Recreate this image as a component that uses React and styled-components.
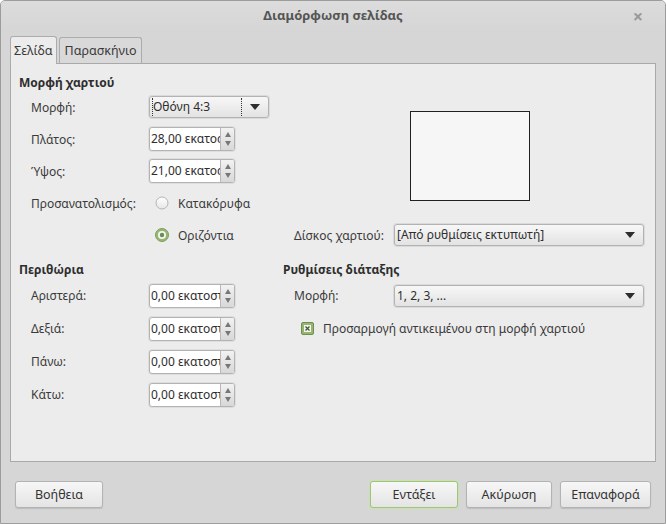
import styled, { createGlobalStyle } from "styled-components";

const GlobalStyle = createGlobalStyle`
  html, body {
    margin: 0;
    padding: 0;
    background: #ffffff;
  }
  body {
    font-family: "Noto Sans", "Liberation Sans", sans-serif;
    font-size: 12px;
    color: #3a3a3a;
  }
`;

const Window = styled.div`
  width: 666px;
  height: 524px;
  box-sizing: border-box;
  background: #d6d6d6;
  border: 1px solid #9c9c9c;
  border-radius: 5px 5px 0 0;
  display: flex;
  flex-direction: column;
  overflow: hidden;
`;

const TitleBar = styled.div`
  height: 27px;
  display: flex;
  align-items: center;
  justify-content: center;
  position: relative;
  background: linear-gradient(#dcdcdc, #d6d6d6);
`;

const Title = styled.div`
  font-weight: 700;
  font-size: 13px;
  color: #555555;
`;

const Close = styled.div`
  position: absolute;
  right: 22px;
  top: 3px;
  font-size: 18px;
  font-weight: 700;
  color: #9a9a9a;
`;

const Body = styled.div`
  flex: 1;
  display: flex;
  flex-direction: column;
  padding: 0 9px;
`;

const Tabs = styled.div`
  margin-top: 7px;
  height: 28px;
  display: flex;
  align-items: flex-end;
  gap: 2px;
`;

const Tab = styled.div`
  height: ${({ $active }) => ($active ? "28px" : "26px")};
  box-sizing: border-box;
  padding: 0 ${({ $active }) => ($active ? "3px" : "5px")};
  display: flex;
  align-items: center;
  font-size: 12.5px;
  background: ${({ $active }) => ($active ? "#ececec" : "#d9d9d9")};
  border: 1px solid #acacac;
  border-bottom: none;
  border-radius: 3px 3px 0 0;
  position: relative;
  z-index: ${({ $active }) => ($active ? 2 : 0)};
  margin-bottom: ${({ $active }) => ($active ? "-1px" : "0")};
  padding-bottom: ${({ $active }) => ($active ? "1px" : "0")};
`;

const Panel = styled.div`
  height: 399px;
  box-sizing: border-box;
  background: #ececec;
  border: 1px solid #a9a9a9;
  padding: 9px 11px 0 8px;
`;

const TopSection = styled.div`
  display: grid;
  grid-template-columns: 264px 1fr;
  grid-template-rows: 18px repeat(5, 32px);
`;

const BottomSection = styled.div`
  margin-top: 8px;
  display: grid;
  grid-template-columns: 264px 1fr;
  grid-template-rows: 20px repeat(4, 33px);
`;

const Heading = styled.div`
  font-weight: 700;
  display: flex;
  align-items: center;
  color: #2e2e2e;
  grid-column: ${({ $col }) => $col || "auto"};
  grid-row: ${({ $row }) => $row || "auto"};
`;

const Row = styled.div`
  display: grid;
  grid-template-columns: ${({ $label }) => $label || "118px"} 1fr;
  align-items: center;
  padding-left: ${({ $indent }) => $indent || "12px"};
  grid-column: ${({ $col }) => $col || "auto"};
  grid-row: ${({ $row }) => $row || "auto"};
`;

const Label = styled.span`
  white-space: nowrap;
`;

const PreviewArea = styled.div`
  grid-column: 2;
  grid-row: 1 / 5;
  padding: 38px 0 0 127px;
`;

const Paper = styled.div`
  width: 120px;
  height: 90px;
  box-sizing: border-box;
  background: #f6f6f6;
  border: 1px solid #202020;
`;

const Combo = styled.div`
  width: ${({ $w }) => $w || "100%"};
  height: 22px;
  box-sizing: border-box;
  display: flex;
  align-items: center;
  border: 1px solid #b3b3b3;
  border-radius: 3px;
  background: linear-gradient(#f7f7f7, #e3e3e3);
  box-shadow: 0 0 0 1px #dadada;
  padding: 0 8px 0 2px;
`;

const ComboText = styled.span`
  flex: 1;
  white-space: nowrap;
  overflow: hidden;
  line-height: 18px;
  color: #2e2e2e;
  ${({ $focus }) =>
    $focus &&
    `
    border-left: 1px dotted #333;
    border-right: 1px dotted #333;
    margin-right: 8px;
  `}
`;

const Spin = styled.div`
  width: 86px;
  height: 24px;
  box-sizing: border-box;
  display: flex;
  border: 1px solid #b3b3b3;
  border-radius: 3px;
  background: #ffffff;
  box-shadow: 0 0 0 1px #dedede;
  overflow: hidden;
`;

const SpinText = styled.span`
  flex: 1;
  white-space: nowrap;
  overflow: hidden;
  padding-left: 1px;
  line-height: 22px;
  font-size: 12px;
  color: #2e2e2e;
`;

const SpinButtons = styled.div`
  width: 13px;
  border-left: 1px solid #b8b8b8;
  background: linear-gradient(#f2f2f2, #d8d8d8);
  display: flex;
  flex-direction: column;
  align-items: center;
  justify-content: center;
  gap: 4px;
`;

const Choice = styled.div`
  display: flex;
  align-items: center;
  gap: 9px;
  padding-left: 6px;
`;

const CheckRow = styled.div`
  grid-column: 2;
  grid-row: 3;
  display: flex;
  align-items: center;
  gap: 9px;
  padding-left: 18px;
`;

const ButtonBar = styled.div`
  margin-top: 19px;
  display: flex;
  gap: 8px;
  padding: 0 5px 0 5px;
`;

const Spacer = styled.div`
  flex: 1;
`;

const Button = styled.div`
  width: ${({ $w }) => $w}px;
  height: 27px;
  box-sizing: border-box;
  display: flex;
  align-items: center;
  justify-content: center;
  border: 1px solid ${({ $default }) => ($default ? "#9fc47a" : "#b3b3b3")};
  box-shadow: ${({ $default }) =>
    $default ? "0 0 0 1px #c9e0b1" : "0 1px 1px rgba(0,0,0,0.12)"};
  border-radius: 3px;
  background: linear-gradient(#f7f7f7, #e4e4e4);
  font-size: 12.5px;
  color: #333;
`;

const Arrow = () => (
  <svg width="10" height="6" viewBox="0 0 10 6">
    <path d="M0 0h10L5 6z" fill="#2e2e2e" />
  </svg>
);

const SpinArrows = () => (
  <SpinButtons>
    <svg width="6" height="5" viewBox="0 0 6 5">
      <path d="M3 0l3 5H0z" fill="#777" />
    </svg>
    <svg width="6" height="5" viewBox="0 0 6 5">
      <path d="M0 0h6L3 5z" fill="#777" />
    </svg>
  </SpinButtons>
);

const Radio = ({ checked }) => (
  <svg width="14" height="14" viewBox="0 0 14 14">
    <defs>
      <linearGradient id="rg" x1="0" y1="0" x2="0" y2="1">
        <stop offset="0" stopColor="#ffffff" />
        <stop offset="1" stopColor="#e6e6e6" />
      </linearGradient>
    </defs>
    {checked ? (
      <>
        <circle cx="7" cy="7" r="6.5" fill="#95b96f" stroke="#7f9d5e" />
        <circle cx="7" cy="7" r="4" fill="#f4f4f4" />
        <circle cx="7" cy="7" r="2.2" fill="#6f8a55" />
      </>
    ) : (
      <circle cx="7" cy="7" r="6" fill="url(#rg)" stroke="#b4b4b4" />
    )}
  </svg>
);

const Check = () => (
  <svg width="13" height="13" viewBox="0 0 13 13">
    <rect x="0.5" y="0.5" width="12" height="12" rx="1.5" fill="#94b66f" stroke="#6f8e50" />
    <rect x="3" y="3" width="7" height="7" fill="#f4f4f4" />
    <path d="M4.5 4.5l4 4M8.5 4.5l-4 4" stroke="#3f5a2b" strokeWidth="1.3" />
  </svg>
);

const SpinField = ({ value }) => (
  <Spin>
    <SpinText>{value}</SpinText>
    <SpinArrows />
  </Spin>
);

export default function App() {
  return (
    <>
      <GlobalStyle />
      <Window>
        <TitleBar>
          <Title>Διαμόρφωση σελίδας</Title>
          <Close>×</Close>
        </TitleBar>
        <Body>
          <Tabs>
            <Tab $active>Σελίδα</Tab>
            <Tab>Παρασκήνιο</Tab>
          </Tabs>
          <Panel>
            <TopSection>
              <Heading $col="1" $row="1">Μορφή χαρτιού</Heading>
              <Row $col="1" $row="2">
                <Label>Μορφή:</Label>
                <Combo $w="120px">
                  <ComboText $focus>Οθόνη 4:3</ComboText>
                  <Arrow />
                </Combo>
              </Row>
              <Row $col="1" $row="3">
                <Label>Πλάτος:</Label>
                <SpinField value="28,00 εκατοστά" />
              </Row>
              <Row $col="1" $row="4">
                <Label>Ύψος:</Label>
                <SpinField value="21,00 εκατοστά" />
              </Row>
              <Row $col="1" $row="5">
                <Label>Προσανατολισμός:</Label>
                <Choice>
                  <Radio />
                  <span>Κατακόρυφα</span>
                </Choice>
              </Row>
              <Row $col="1" $row="6">
                <span />
                <Choice>
                  <Radio checked />
                  <span>Οριζόντια</span>
                </Choice>
              </Row>
              <PreviewArea>
                <Paper />
              </PreviewArea>
              <Row $col="2" $row="6" $indent="11px" $label="100px">
                <Label>Δίσκος χαρτιού:</Label>
                <Combo>
                  <ComboText>[Από ρυθμίσεις εκτυπωτή]</ComboText>
                  <Arrow />
                </Combo>
              </Row>
            </TopSection>
            <BottomSection>
              <Heading $col="1" $row="1">Περιθώρια</Heading>
              <Row $col="1" $row="2">
                <Label>Αριστερά:</Label>
                <SpinField value="0,00 εκατοστά" />
              </Row>
              <Row $col="1" $row="3">
                <Label>Δεξιά:</Label>
                <SpinField value="0,00 εκατοστά" />
              </Row>
              <Row $col="1" $row="4">
                <Label>Πάνω:</Label>
                <SpinField value="0,00 εκατοστά" />
              </Row>
              <Row $col="1" $row="5">
                <Label>Κάτω:</Label>
                <SpinField value="0,00 εκατοστά" />
              </Row>
              <Heading $col="2" $row="1">Ρυθμίσεις διάταξης</Heading>
              <Row $col="2" $row="2" $indent="11px" $label="100px">
                <Label>Μορφή:</Label>
                <Combo>
                  <ComboText>1, 2, 3, ...</ComboText>
                  <Arrow />
                </Combo>
              </Row>
              <CheckRow>
                <Check />
                <span>Προσαρμογή αντικειμένου στη μορφή χαρτιού</span>
              </CheckRow>
            </BottomSection>
          </Panel>
          <ButtonBar>
            <Button $w={88}>Βοήθεια</Button>
            <Spacer />
            <Button $w={88} $default>
              Εντάξει
            </Button>
            <Button $w={86}>Ακύρωση</Button>
            <Button $w={91}>Επαναφορά</Button>
          </ButtonBar>
        </Body>
      </Window>
    </>
  );
}
